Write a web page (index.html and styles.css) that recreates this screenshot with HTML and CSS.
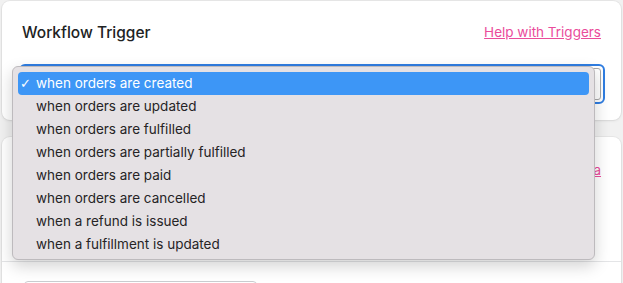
FILE: index.html
```html
<!DOCTYPE html>
<html lang="en">
<head>
    <meta charset="UTF-8">
    <meta name="viewport" content="width=device-width, initial-scale=1.0">
    <title>Workflow Trigger</title>
    <link rel="stylesheet" href="styles.css">
</head>
<body>
    <div class="page">
        <!-- Trigger card -->
        <div class="card trigger-card">
            <div class="card-head">
                <h2>Workflow Trigger</h2>
                <a href="#" class="help-link">Help with Triggers</a>
            </div>
            <div class="select-box">
                <span class="select-value"></span>
            </div>
        </div>

        <!-- Conditions card (mostly hidden by the open dropdown) -->
        <div class="card conditions-card">
            <div class="card-head">
                <a href="#" class="help-link">Help with data</a>
            </div>
            <div class="card-body"></div>
            <div class="card-foot">
                <div class="add-field"></div>
            </div>
        </div>
    </div>

    <!-- open dropdown of the trigger select -->
    <ul class="dropdown">
        <li class="selected"><span class="check">&#10003;</span>when orders are created</li>
        <li>when orders are updated</li>
        <li>when orders are fulfilled</li>
        <li>when orders are partially fulfilled</li>
        <li>when orders are paid</li>
        <li>when orders are cancelled</li>
        <li>when a refund is issued</li>
        <li>when a fulfillment is updated</li>
    </ul>
</body>
</html>
```
FILE: styles.css
```css
body {
    margin: 0;
    padding: 0;
    background-color: #f1f1f1;
    font-family: Inter, "Noto Sans", sans-serif;
    color: #202223;
    overflow: hidden;
}
.page {
    padding: 1px 2px 0 2px;
}
.card {
    background-color: white;
    border-radius: 8px;
    box-shadow: 0 0 0 1px rgba(0, 0, 0, 0.04), 0 1px 3px rgba(0, 0, 0, 0.08);
}
.trigger-card {
    height: 119px;
    padding: 0 16px 0 17px;
    box-sizing: border-box;
}
.card-head {
    display: flex;
    justify-content: space-between;
    align-items: center;
    height: 63px;
    padding: 0 4px 0 3px;
}
.card-head h2 {
    margin: 0;
    font-size: 15.5px;
    font-weight: 500;
    margin-top: -1px;
}
.help-link {
    color: #ea4c9b;
    font-size: 13.5px;
    text-decoration: underline;
    margin-top: -1px;
}
.select-box {
    height: 40px;
    box-sizing: border-box;
    border: 2px solid #2f7de1;
    border-radius: 6px;
    padding: 2px;
}
.select-value {
    display: block;
    height: 100%;
    border: 1px solid #a8a8a8;
    border-radius: 3px;
    box-sizing: border-box;
}
.conditions-card {
    margin-top: 17px;
    height: 160px;
    overflow: hidden;
}
.conditions-card .card-head {
    height: 66px;
    padding: 0 20px;
    justify-content: flex-end;
}
.card-body {
    height: 58px;
}
.card-foot {
    border-top: 1px solid #e4e5e7;
    padding: 19px 0 0 22px;
}
.add-field {
    width: 231px;
    height: 30px;
    border: 1px solid #c9cccf;
    border-radius: 4px;
}
.dropdown {
    position: absolute;
    left: 12px;
    top: 66px;
    width: 583px;
    height: 194px;
    box-sizing: border-box;
    margin: 0;
    padding: 5px 5px;
    list-style-type: none;
    background-color: #e5e1e4;
    border: 1px solid #bdbabd;
    border-radius: 6px;
    box-shadow: 0 6px 16px rgba(0, 0, 0, 0.18);
    font-size: 13.5px;
    color: #262426;
}
.dropdown li {
    height: 23px;
    line-height: 23px;
    padding-left: 18px;
    position: relative;
}
.dropdown li.selected {
    background-color: #3d96f6;
    color: white;
    border-radius: 4px;
}
.check {
    position: absolute;
    left: 2px;
    top: 0;
    font-family: "DejaVu Sans", sans-serif;
    font-size: 13px;
}
```
